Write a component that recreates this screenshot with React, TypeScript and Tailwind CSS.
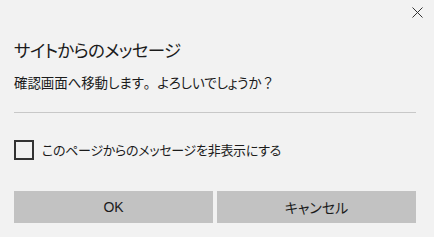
import React from 'react'

const font = "font-['Segoe_UI','Noto_Sans_CJK_JP',sans-serif] [font-feature-settings:'palt']"
const fullWidth = "[font-feature-settings:normal]"

export default function App() {
  return (
    <div className={`relative w-[434px] h-[237px] bg-[#f2f2f2] text-[#1b1b1b] ${font}`}>
      {/* Close button */}
      <button className="absolute top-[6px] right-[11px] w-[12px] h-[12px] flex items-center justify-center text-[#333]">
        <svg width="11" height="11" viewBox="0 0 11 11" fill="none" stroke="currentColor" strokeWidth="1">
          <path d="M0.5 0.5 L10.5 10.5 M10.5 0.5 L0.5 10.5" />
        </svg>
      </button>

      <div className="pl-[14px] pr-[18px] pt-[37px]">
        <h1 className="text-[17.5px] leading-[26px] tracking-[-0.7px] text-[#1b1b1b]">サイトからのメッセージ</h1>
        <p className="mt-[9px] text-[13.5px] leading-[20px] tracking-[-0.1px] text-[#1b1b1b]">
          確認画面へ移動します<span className={fullWidth}>。</span>よろしいでしょうか<span className={fullWidth}>？</span>
        </p>

        <div className="mt-[20px] h-px bg-[#c8c8c8]" />

        <label className="mt-[27px] flex items-center gap-[8px] h-[20px]">
          <span className="w-[20px] h-[20px] border-2 border-[#333] bg-[#f2f2f2] shrink-0" />
          <span className="text-[13px] leading-[20px] tracking-[-0.3px]">このページからのメッセージを非表示にする</span>
        </label>

        <div className="mt-[31px] flex gap-[4px]">
          <button className="flex-1 h-[32px] bg-[#c2c2c2] text-[14px] text-[#1b1b1b] font-['Liberation_Sans','Noto_Sans_CJK_JP',sans-serif]">OK</button>
          <button className="flex-1 h-[32px] bg-[#c2c2c2] text-[14px] text-[#1b1b1b]">キャンセル</button>
        </div>
      </div>
    </div>
  )
}
